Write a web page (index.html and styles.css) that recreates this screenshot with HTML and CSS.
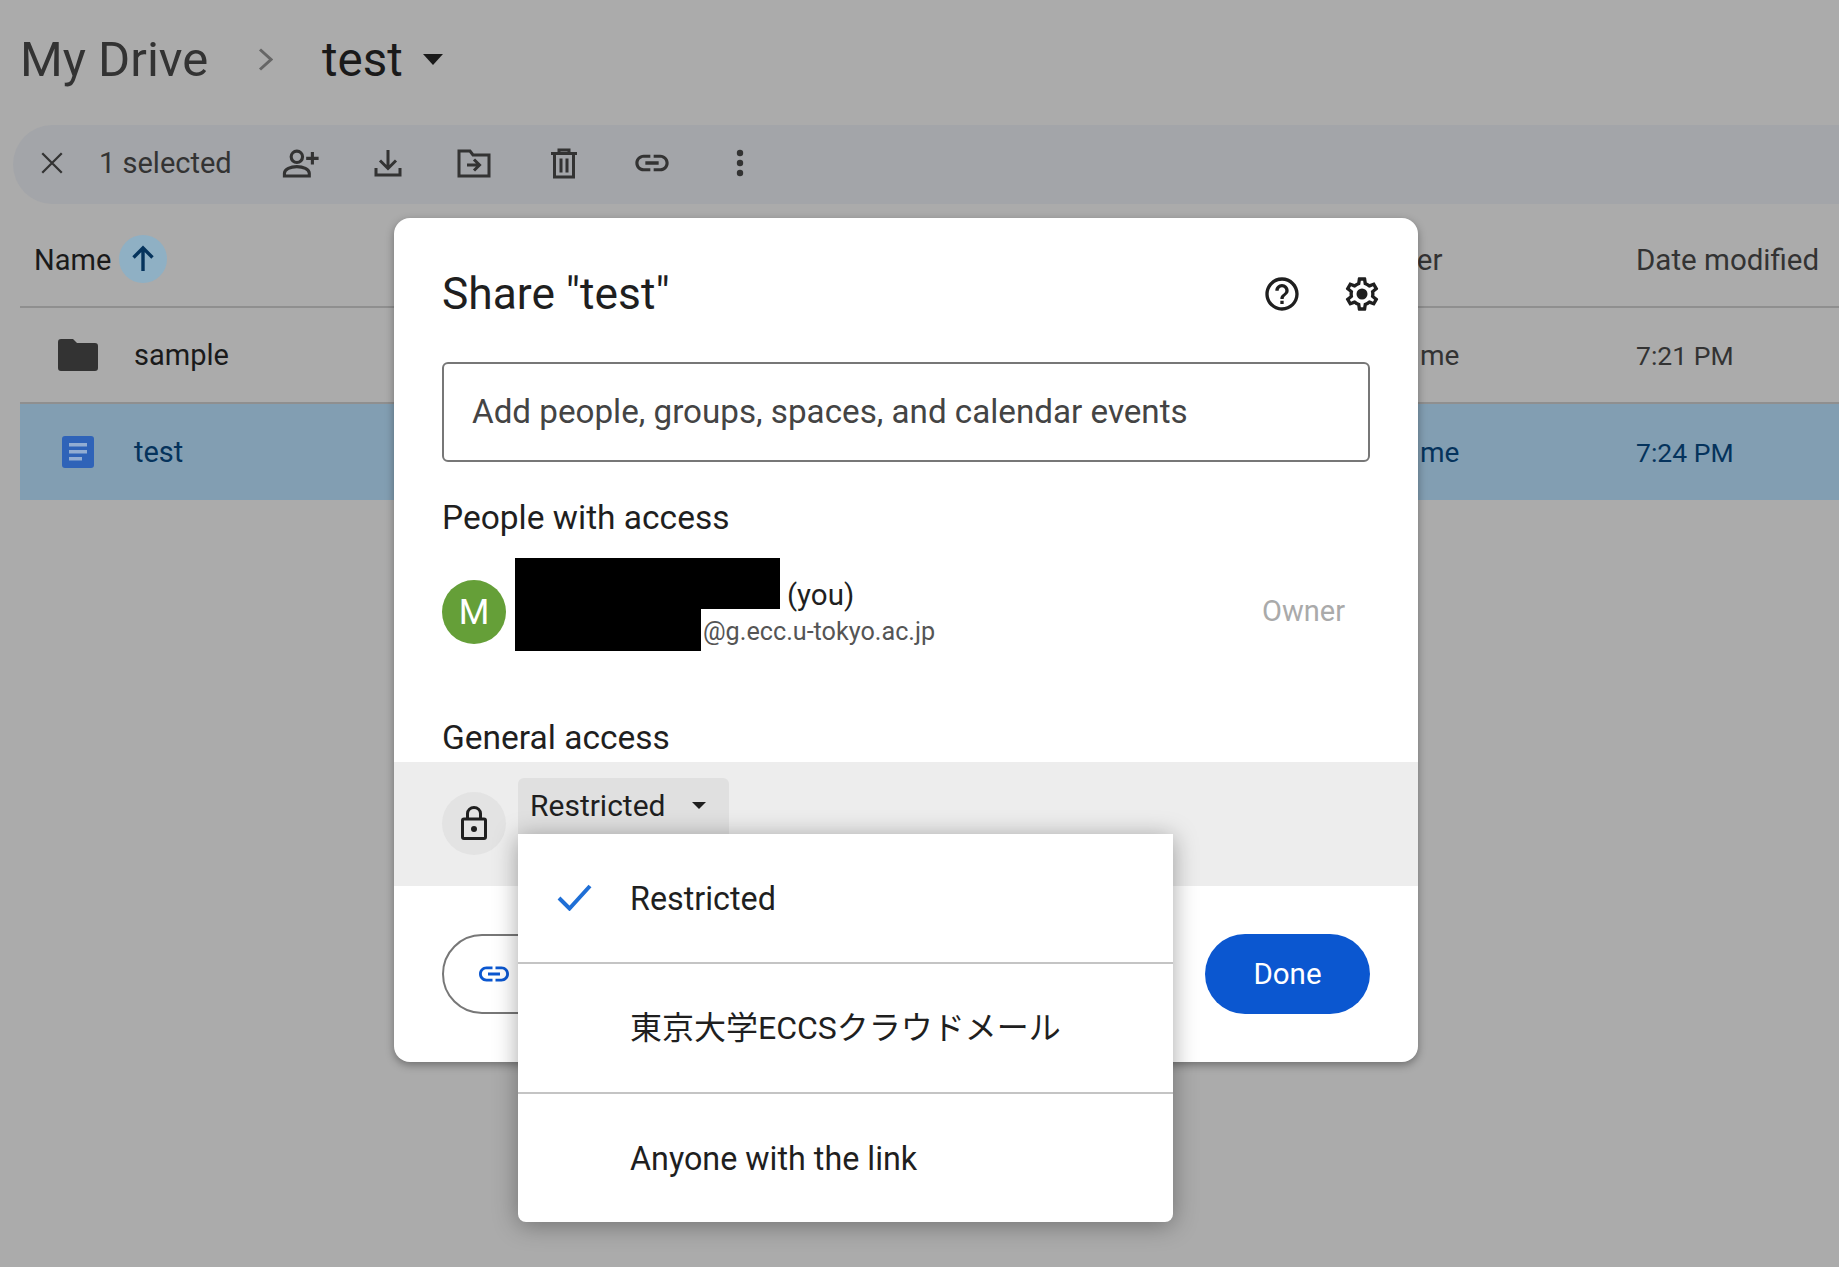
FILE: index.html
```html
<!DOCTYPE html>
<html lang="en">
<head>
<meta charset="utf-8">
<title>Share test</title>
<link rel="stylesheet" href="styles.css">
</head>
<body>
<div class="page">
  <header class="crumbs">
    <span class="crumb-root">My Drive</span>
    <svg class="crumb-chevron" viewBox="0 0 15 23"><path d="M2 1.500 13 11.500 2 21.500" fill="none" stroke="#666" stroke-width="3"/></svg>
    <span class="crumb-current">test</span>
    <svg class="crumb-caret" viewBox="0 0 20 11"><path d="M0 0h20L10 11z" fill="#1a1a1a"/></svg>
  </header>

  <div class="toolbar">
    <svg class="tb-icon tb-close" viewBox="0 0 24 24"><path d="M3 3 21 21M21 3 3 21" fill="none" stroke="#333" stroke-width="2.100"/></svg>
    <span class="tb-count">1 selected</span>
    <svg class="tb-icon tb-person" viewBox="0 0 36 28"><g fill="none" stroke="#333" stroke-width="3"><circle cx="14" cy="7.500" r="5.500"/><path d="M2 26v-2.500c0-4 6-6.500 12-6.500s12 2.500 12 6.500V26z"/><path d="M29 3v12M23 9h12"/></g></svg>
    <svg class="tb-icon tb-down" viewBox="0 0 28 28"><g fill="none" stroke="#333" stroke-width="3"><path d="M14 1v18M6 11.500l8 8 8-8"/><path d="M2 19v7h24v-7"/></g></svg>
    <svg class="tb-icon tb-move" viewBox="0 0 34 30"><g fill="none" stroke="#333" stroke-width="3"><path d="M2 3h11l3 4h16v21H2z"/><path d="M10 17h12M17 11.500l5.500 5.500-5.500 5.500"/></g></svg>
    <svg class="tb-icon tb-trash" viewBox="0 0 26 30"><g fill="none" stroke="#333" stroke-width="3"><path d="M0 5h26M8 5V1.500h10V5"/><path d="M3.500 5v23.500h19V5"/><path d="M10 10v14M16 10v14"/></g></svg>
    <svg class="tb-icon tb-link" viewBox="0 0 24 24"><path fill="#333" d="M3.900 12c0-1.710 1.390-3.100 3.100-3.100h4V7H7c-2.760 0-5 2.240-5 5s2.240 5 5 5h4v-1.900H7c-1.710 0-3.100-1.390-3.100-3.100zM8 13h8v-2H8v2zm9-6h-4v1.900h4c1.710 0 3.100 1.390 3.100 3.100s-1.390 3.100-3.100 3.100h-4V17h4c2.760 0 5-2.240 5-5s-2.240-5-5-5z"/></svg>
    <svg class="tb-icon tb-more" viewBox="0 0 8 28"><g fill="#333"><circle cx="4" cy="4" r="3.200"/><circle cx="4" cy="14" r="3.200"/><circle cx="4" cy="24" r="3.200"/></g></svg>
  </div>

  <div class="table">
    <div class="row row-head">
      <div class="cell-name">
        <span class="head-name">Name</span>
        <span class="sort-badge"><svg viewBox="0 0 24 28"><path d="M12 26V3M2.500 12.500 12 3l9.500 9.500" fill="none" stroke="#05335c" stroke-width="3.400"/></svg></span>
      </div>
      <div class="head-owner">Owner</div>
      <div class="head-date">Date modified</div>
    </div>
    <div class="row row-item">
      <div class="cell-name item-name">
        <svg class="ic-folder" viewBox="0 0 40 32"><path d="M3 0h12l4 4h18a3 3 0 0 1 3 3v22a3 3 0 0 1-3 3H3a3 3 0 0 1-3-3V3a3 3 0 0 1 3-3z" fill="#333"/></svg>
        <span>sample</span>
      </div>
      <div class="cell-owner">me</div>
      <div class="cell-date">7:21 PM</div>
    </div>
    <div class="row row-item row-selected">
      <div class="cell-name item-name">
        <svg class="ic-doc" viewBox="0 0 32 32"><rect width="32" height="32" rx="3" fill="#2f63b8"/><path d="M7 7h18v3.500H7zM7 14h18v3.500H7zM7 21h13v3.500H7z" fill="#92add2"/></svg>
        <span>test</span>
      </div>
      <div class="cell-owner">me</div>
      <div class="cell-date">7:24 PM</div>
    </div>
  </div>
</div>

<section class="dialog">
  <div class="dialog-head">
    <h1 class="dialog-title">Share "test"</h1>
    <svg class="dh-icon dh-help" viewBox="0 0 24 24"><path fill="#1f1f1f" d="M11 18h2v-2h-2v2zm1-16C6.480 2 2 6.480 2 12s4.480 10 10 10 10-4.480 10-10S17.520 2 12 2zm0 18c-4.410 0-8-3.590-8-8s3.590-8 8-8 8 3.590 8 8-3.590 8-8 8zm0-14c-2.210 0-4 1.790-4 4h2c0-1.100.9-2 2-2s2 .9 2 2c0 2-3 1.750-3 5h2c0-2.250 3-2.500 3-5 0-2.210-1.790-4-4-4z"/></svg>
    <svg class="dh-icon dh-gear" viewBox="0 0 24 24"><path fill="#1f1f1f" d="M19.430 12.980c.04-.32.07-.64.07-.98 0-.34-.03-.66-.07-.98l2.110-1.650c.19-.15.24-.42.12-.64l-2-3.460c-.09-.16-.26-.25-.44-.25-.06 0-.12.01-.17.03l-2.490 1c-.52-.4-1.080-.73-1.690-.98l-.38-2.650C14.460 2.180 14.250 2 14 2h-4c-.25 0-.46.18-.49.42l-.38 2.650c-.61.25-1.170.59-1.690.98l-2.490-1c-.06-.02-.12-.03-.18-.03-.17 0-.34.09-.43.25l-2 3.460c-.13.22-.07.49.12.64l2.110 1.650c-.04.32-.07.65-.07.98 0 .33.03.66.07.98l-2.110 1.650c-.19.15-.24.42-.12.64l2 3.460c.09.16.26.25.44.25.06 0 .12-.01.17-.03l2.490-1c.52.4 1.080.73 1.690.98l.38 2.650c.03.24.24.42.49.42h4c.25 0 .46-.18.49-.42l.38-2.650c.61-.25 1.170-.59 1.690-.98l2.490 1c.06.02.12.03.18.03.17 0 .34-.09.43-.25l2-3.460c.12-.22.07-.49-.12-.64l-2.110-1.650zm-1.980-1.710c.04.31.05.52.05.73 0 .21-.02.43-.05.73l-.14 1.130.89.7 1.080.84-.7 1.210-1.270-.51-1.040-.42-.9.68c-.43.32-.84.56-1.250.73l-1.060.43-.16 1.130-.2 1.350h-1.400l-.19-1.350-.16-1.130-1.060-.43c-.43-.18-.83-.41-1.230-.71l-.91-.7-1.060.43-1.270.51-.7-1.210 1.080-.84.89-.7-.14-1.130c-.03-.31-.05-.54-.05-.74s.02-.43.05-.73l.14-1.130-.89-.7-1.080-.84.7-1.210 1.270.51 1.040.42.9-.68c.43-.32.84-.56 1.250-.73l1.060-.43.16-1.130.2-1.350h1.390l.19 1.350.16 1.130 1.060.43c.43.18.83.41 1.230.71l.91.7 1.060-.43 1.270-.51.7 1.210-1.070.85-.89.7.14 1.130z"/><circle cx="12" cy="12" r="3.300" fill="#1f1f1f"/></svg>
  </div>

  <div class="add-box">Add people, groups, spaces, and calendar events</div>

  <h2 class="section-title people-title">People with access</h2>
  <div class="person">
    <div class="avatar">M</div>
    <div class="person-info">
      <div class="person-line1"><span class="redact redact-name"></span><span class="you">(you)</span></div>
      <div class="person-line2"><span class="redact redact-mail"></span><span class="mail">@g.ecc.u-tokyo.ac.jp</span></div>
    </div>
    <div class="owner-role">Owner</div>
  </div>

  <h2 class="section-title general-title">General access</h2>
  <div class="access-band">
    <div class="lock-circle">
      <svg viewBox="0 0 26 34"><g fill="none" stroke="#1f1f1f" stroke-width="3"><rect x="1.500" y="13" width="23" height="19.500" rx="1.500"/><path d="M6.500 13V7.500a6.500 6 0 0 1 13 0V13"/></g><circle cx="13" cy="23" r="3" fill="#1f1f1f"/></svg>
    </div>
    <div class="access-select">
      <span>Restricted</span>
      <svg viewBox="0 0 14 7"><path d="M0 0h14L7 7z" fill="#1f1f1f"/></svg>
    </div>

    <ul class="menu">
      <li class="menu-item">
        <svg class="menu-check" viewBox="0 0 35 27"><path d="M2 14 12.500 24.500 33 2" fill="none" stroke="#1f6fd6" stroke-width="4"/></svg>
        <span>Restricted</span>
      </li>
      <li class="menu-item menu-item-cjk">東京大学ECCSクラウドメール</li>
      <li class="menu-item">Anyone with the link</li>
    </ul>
  </div>

  <div class="dialog-foot">
    <div class="copy-btn">
      <svg viewBox="0 0 24 24"><path fill="#0b57d0" d="M3.900 12c0-1.710 1.390-3.100 3.100-3.100h4V7H7c-2.760 0-5 2.240-5 5s2.240 5 5 5h4v-1.900H7c-1.710 0-3.100-1.390-3.100-3.100zM8 13h8v-2H8v2zm9-6h-4v1.900h4c1.710 0 3.100 1.390 3.100 3.100s-1.390 3.100-3.100 3.100h-4V17h4c2.760 0 5-2.240 5-5s-2.240-5-5-5z"/></svg>
    </div>
    <div class="done-btn">Done</div>
  </div>
</section>
</body>
</html>
```

FILE: styles.css
```css
* { box-sizing: border-box; }
html, body { margin: 0; padding: 0; }
body {
  width: 1839px;
  height: 1267px;
  overflow: hidden;
  background: #ababab;
  font-family: Roboto, "Noto Sans CJK JP", sans-serif;
  position: relative;
}

.crumbs { height: 125px; display: flex; align-items: center; padding: 0 0 6px 20px; }
.crumb-root { font-size: 49px; color: #333; width: 238px; }
.crumb-chevron { width: 15px; height: 23px; }
.crumb-current { font-size: 47.500px; color: #1a1a1a; margin-left: 49px; width: 101px; }
.crumb-caret { width: 20px; height: 11px; }

.toolbar { height: 79px; margin-left: 13px; padding-bottom: 3px; background: #a3a5a9; border-radius: 40px 0 0 40px; display: flex; align-items: center; position: relative; }
.tb-icon { flex: none; }
.tb-close { width: 26px; height: 26px; margin-left: 26px; }
.tb-count { font-size: 29px; color: #333; margin-left: 34px; width: 183px; }
.tb-person { width: 38px; height: 29px; }
.tb-down { width: 28px; height: 28px; margin-left: 54px; }
.tb-move { width: 34px; height: 30px; margin-left: 55px; }
.tb-trash { width: 26px; height: 31px; margin-left: 60px; }
.tb-link { width: 40px; height: 40px; margin-left: 55px; }
.tb-more { width: 8px; height: 28px; margin-left: 64px; }

.table { margin: 14px 0 0 20px; }
.row { display: grid; grid-template-columns: 1330px 286px 1fr; align-items: center; }
.row-head { height: 88px; padding-bottom: 5px; color: #333; font-size: 29.500px; }
.row-item { height: 96px; border-top: 2px solid #8f8f8f; font-size: 28px; color: #333; }
.row-selected { height: 98px; background: #829eb2; color: #05335c; }
.cell-name { display: flex; align-items: center; }
.head-name { margin-left: 14px; font-size: 29px; color: #1a1a1a; font-weight: 450; }
.head-owner { padding-left: 8px; }
.sort-badge { width: 48px; height: 48px; border-radius: 50%; background: #8fb0c4; margin-left: 8px; margin-bottom: 2px; display: flex; align-items: center; justify-content: center; }
.sort-badge svg { width: 24px; height: 28px; }
.item-name { font-size: 29px; color: #1a1a1a; font-weight: 450; }
.row-selected .item-name { color: #05335c; }
.ic-folder { width: 40px; height: 32px; margin: 0 36px 0 38px; }
.ic-doc { width: 32px; height: 32px; margin: 0 40px 0 42px; }
.cell-owner { padding-left: 70px; }
.cell-date { font-size: 26.500px; }

.dialog {
  position: absolute;
  left: 394px;
  top: 218px;
  width: 1024px;
  height: 844px;
  background: #fff;
  border-radius: 16px;
  box-shadow: 0 3px 8px rgba(0,0,0,.35);
}
.dialog-head { height: 144px; padding: 51px 0 0 48px; display: flex; align-items: flex-start; position: relative; }
.dialog-title { margin: 0; font-size: 44.300px; line-height: 50px; font-weight: 400; color: #1f1f1f; flex: 1; }
.dh-icon { width: 40px; height: 40px; flex: none; }
.dh-help { margin: 5px 0 0 0; }
.dh-gear { margin: 5px 36px 0 40px; }

.add-box { margin: 0 48px; height: 100px; border: 2px solid #777; border-radius: 6px; padding-left: 28px; font-size: 33.200px; line-height: 96px; color: #444; }

.section-title { margin: 0 0 0 48px; font-size: 33.500px; line-height: 40px; font-weight: 450; color: #1f1f1f; }
.people-title { margin-top: 36px; }
.general-title { margin-top: 67px; }

.person { margin: 20px 0 0 48px; height: 93px; display: flex; align-items: flex-start; position: relative; }
.avatar { width: 64px; height: 64px; margin-top: 22px; border-radius: 50%; background: #659f38; color: #fff; font-size: 35px; display: flex; align-items: center; justify-content: center; }
.person-info { margin-left: 9px; flex: 1; }
.person-line1, .person-line2 { display: flex; }
.redact { display: block; background: #000; }
.redact-name { width: 265px; height: 51px; }
.redact-mail { width: 186px; height: 42px; }
.you { font-size: 29.500px; line-height: 30px; margin: 21px 0 0 7px; color: #1f1f1f; transform: translateY(1px); }
.mail { font-size: 25.200px; line-height: 30px; margin: 8px 0 0 2px; color: #555; }
.owner-role { font-size: 29px; color: #aaa; margin: 36px 73px 0 0; }

.access-band { margin-top: 4px; height: 124px; background: #ededed; padding-left: 48px; display: flex; align-items: flex-start; position: relative; }
.lock-circle { width: 64px; height: 63px; margin-top: 30px; padding-bottom: 2px; border-radius: 50%; background: #e3e3e3; display: flex; align-items: center; justify-content: center; }
.lock-circle svg { width: 26px; height: 34px; }
.access-select { width: 211px; height: 56px; margin: 16px 0 0 12px; padding: 0 0 2px 12px; background: #e0e0e0; border-radius: 6px 6px 0 0; display: flex; align-items: center; font-size: 30px; color: #1f1f1f; }
.access-select svg { width: 14px; height: 7px; margin-left: 26px; }

.menu {
  position: absolute;
  left: 124px;
  top: 72px;
  width: 655px;
  height: 388px;
  margin: 0;
  padding: 0;
  list-style: none;
  background: #fff;
  border-radius: 0 0 8px 8px;
  box-shadow: 0 3px 24px rgba(0,0,0,.35);
}
.menu-item { height: 130px; padding: 1px 0 0 112px; display: flex; align-items: center; font-size: 32.300px; color: #1f1f1f; position: relative; border-bottom: 2px solid #c4c4c4; }
.menu-item-cjk { padding: 0 0 6px 112px; font-size: 32px; }
.menu-item:last-child { border-bottom: 0; height: 128px; }
.menu-check { position: absolute; left: 39px; top: 50px; width: 35px; height: 27px; }

.dialog-foot { padding: 48px 48px 0 48px; display: flex; justify-content: space-between; }
.copy-btn { width: 300px; height: 80px; border: 2px solid #777; border-radius: 40px; display: flex; align-items: center; padding-left: 32px; }
.copy-btn svg { width: 36px; height: 36px; }
.done-btn { width: 165px; height: 80px; border-radius: 40px; background: #0b57d0; color: #fff; font-size: 29.500px; font-weight: 450; display: flex; align-items: center; justify-content: center; }
```
